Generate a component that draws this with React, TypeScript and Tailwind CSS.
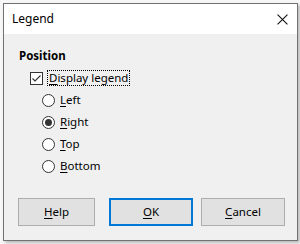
import React from 'react';

const font = { fontFamily: '"Noto Sans", "Open Sans", sans-serif' };

function Mn({ k, rest }: { k: string; rest: string }) {
  return (
    <span>
      <span className="underline underline-offset-2 decoration-1">{k}</span>
      {rest}
    </span>
  );
}

function Radio({ checked, k, rest }: { checked?: boolean; k: string; rest: string }) {
  return (
    <div className="flex h-[22px] items-center gap-[5px] pl-[23px]">
      <span className="flex h-[13px] w-[13px] items-center justify-center rounded-full border border-[#333] bg-white">
        {checked && <span className="h-[7px] w-[7px] rounded-full bg-[#333]" />}
      </span>
      <Mn k={k} rest={rest} />
    </div>
  );
}

function Btn({ k, rest, def, w }: { k: string; rest: string; def?: boolean; w: string }) {
  return (
    <button
      className={
        def
          ? `h-[28px] ${w} border-2 border-[#0078d7] bg-[#e1e1e1] text-[11.5px] text-black`
          : `h-[28px] ${w} border border-[#adadad] bg-[#e1e1e1] text-[11.5px] text-black`
      }
    >
      <Mn k={k} rest={rest} />
    </button>
  );
}

export default function App() {
  return (
    <div className="h-[244px] w-[300px] bg-[#f7f7f7] pl-[3px] pt-[3px]" style={font}>
      <div className="flex h-[238px] w-[295px] flex-col border border-[#727272] bg-[#f0f0f0] shadow-[2px_2px_3px_rgba(0,0,0,0.25)]">
        {/* title bar */}
        <div className="flex h-[30px] items-center justify-between bg-white pl-[8px] pr-[9px] text-[12px] text-black">
          <span>Legend</span>
          <svg viewBox="0 0 10 10" className="h-[11px] w-[11px]" aria-hidden>
            <path d="M0.5 0.5l9 9M9.5 0.5l-9 9" stroke="#111" strokeWidth="1" />
          </svg>
        </div>

        <div className="flex flex-1 flex-col pl-[15px] pt-[14px] text-[11.5px] text-black">
          <div className="h-[16px] font-bold leading-[16px]">Position</div>
          <div className="mt-[3px] flex h-[22px] items-center gap-[4px] pl-[11px]">
            <span className="flex h-[13px] w-[13px] items-center justify-center border border-[#333] bg-white">
              <svg viewBox="0 0 11 11" className="h-[11px] w-[11px]" aria-hidden>
                <path d="M1.5 5.5l2.5 2.5 5.5-5.5" stroke="#333" strokeWidth="1.1" fill="none" />
              </svg>
            </span>
            <span className="border border-dotted border-black px-[1px] leading-[14px]">
              <Mn k="D" rest="isplay legend" />
            </span>
          </div>
          <Radio k="L" rest="eft" />
          <Radio checked k="R" rest="ight" />
          <Radio k="T" rest="op" />
          <Radio k="B" rest="ottom" />

          <div className="-ml-[1px] mt-auto mb-[14px] flex">
            <Btn k="H" rest="elp" w="w-[77px]" />
            <div className="w-[14px]" />
            <Btn def k="O" rest="K" w="w-[84px]" />
            <div className="w-[8px]" />
            <Btn k="C" rest="ancel" w="w-[84px]" />
          </div>
        </div>
      </div>
    </div>
  );
}
